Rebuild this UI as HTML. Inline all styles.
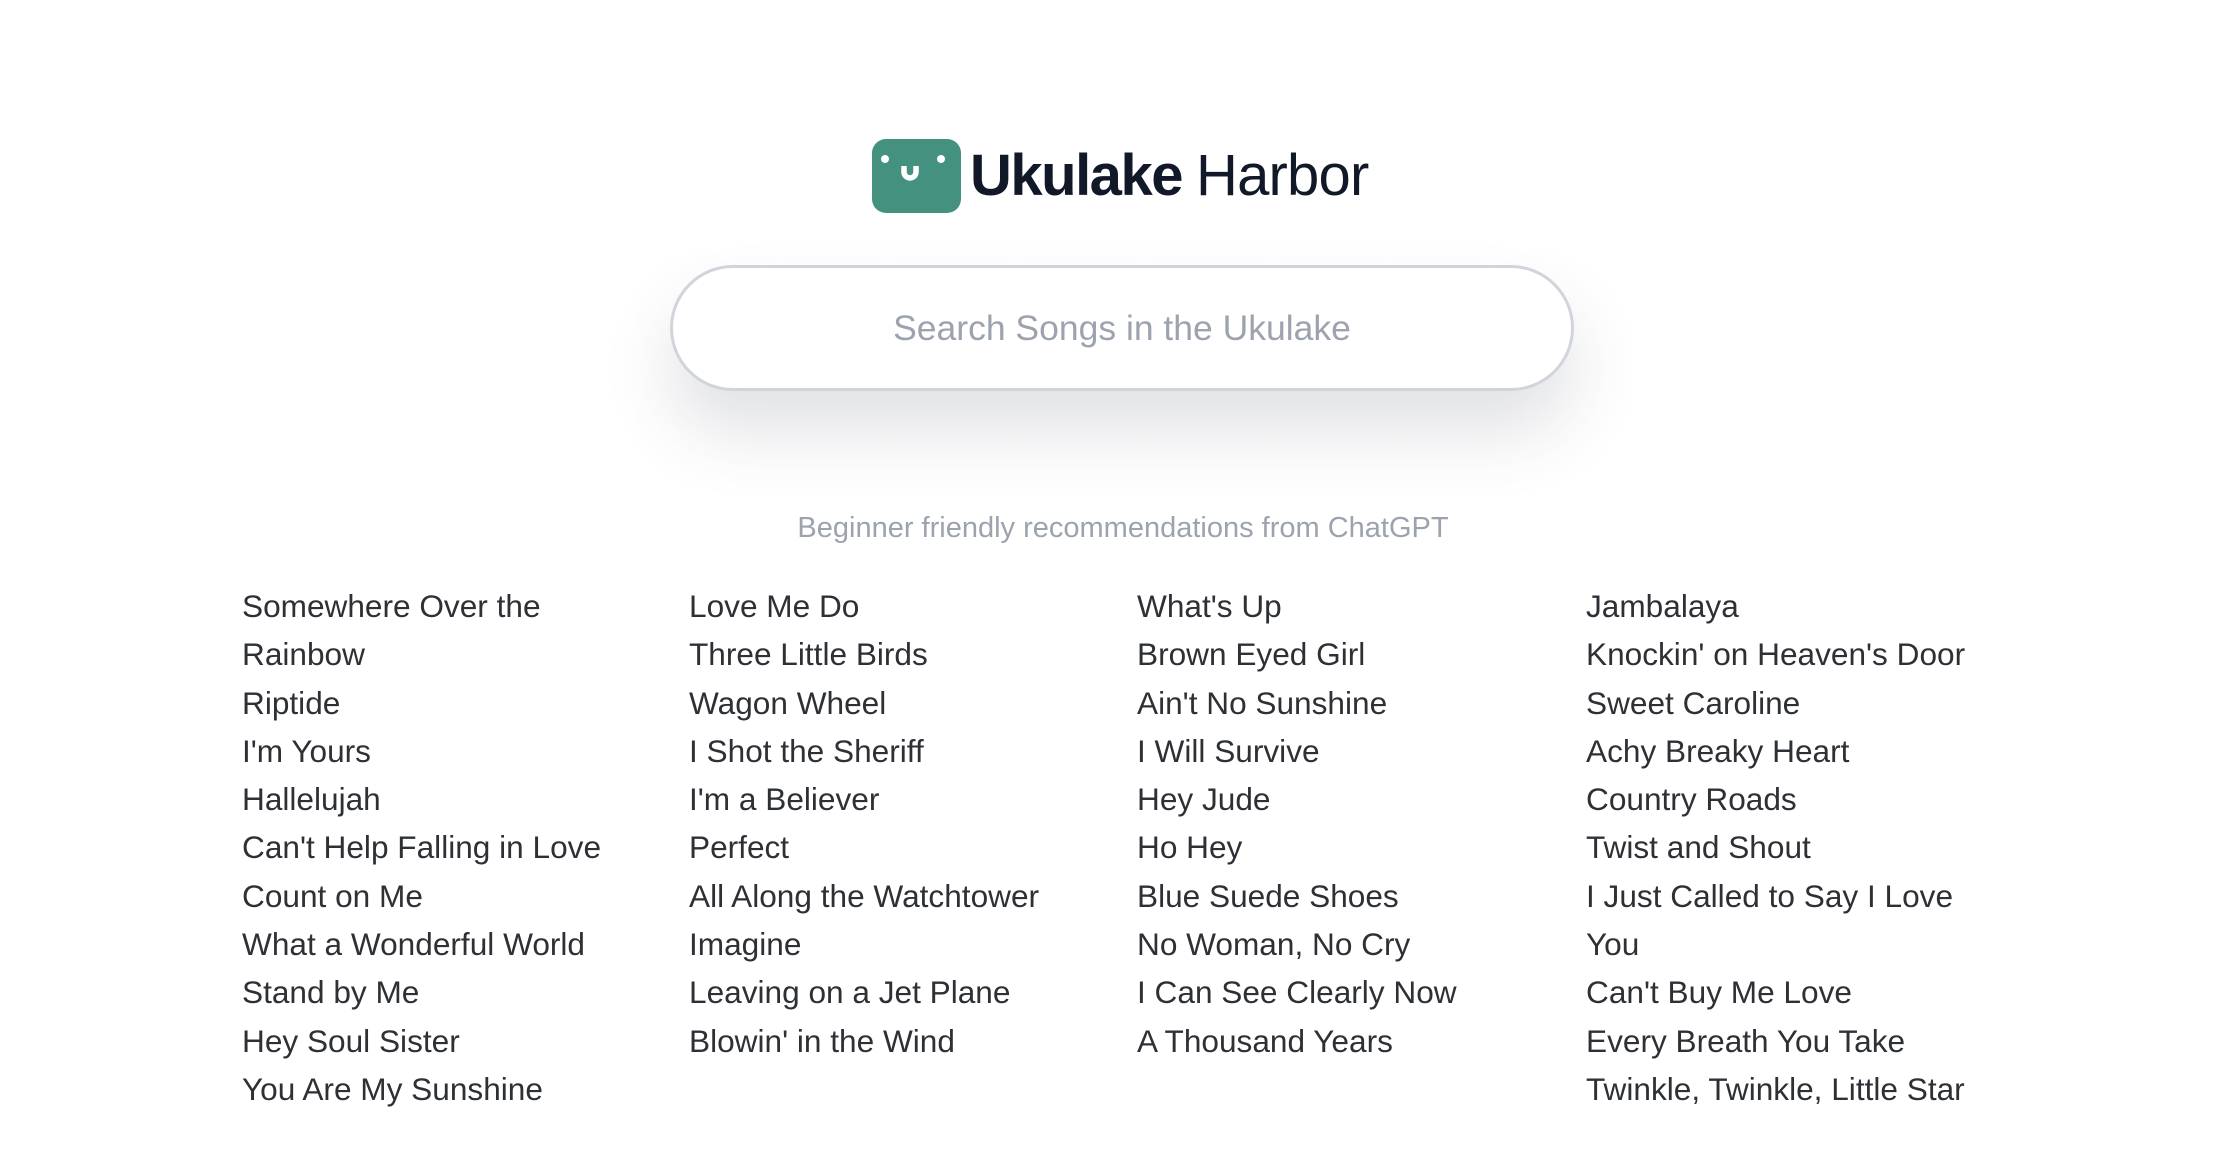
<!DOCTYPE html>
<html><head><meta charset="utf-8"><style>
html,body{margin:0;padding:0;background:#fff;width:2240px;height:1164px;overflow:hidden;font-family:"Liberation Sans",sans-serif}
.t{position:absolute;top:139px;font-size:58px;color:#111827;line-height:74px}
.search{position:absolute;left:670px;top:265px;width:898px;height:120px;border:3px solid #d1d5db;border-radius:64px;box-sizing:content-box;background:#fff;box-shadow:0 40px 70px rgba(60,70,90,0.16);text-align:center;line-height:120px;font-size:35.5px;color:#9ca3af}
.sub{position:absolute;left:0;width:2246px;top:512px;text-align:center;font-size:29px;color:#9ca3af}
.col{position:absolute;top:582px;font-size:31.6px;line-height:48.3px;color:#2d3035;white-space:nowrap}
</style></head><body>
<svg style="position:absolute;left:872px;top:139px" width="89" height="74" viewBox="0 0 89 74">
<rect width="89" height="74" rx="14" fill="#44917f"/>
<circle cx="13" cy="20" r="4" fill="#fff"/><circle cx="69" cy="20" r="4" fill="#fff"/>
<path d="M32 27 v6 a6 6 0 0 0 12 0 v-6" fill="none" stroke="#fff" stroke-width="5.5"/>
</svg>
<div class="t" style="left:970px;font-weight:bold;letter-spacing:-1.5px">Ukulake</div>
<div class="t" style="left:1196px;letter-spacing:-0.8px">Harbor</div>
<div class="search">Search Songs in the Ukulake</div>
<div class="sub">Beginner friendly recommendations from ChatGPT</div>
<div class="col" style="left:242px">Somewhere Over the<br>Rainbow<br>Riptide<br>I'm Yours<br>Hallelujah<br>Can't Help Falling in Love<br>Count on Me<br>What a Wonderful World<br>Stand by Me<br>Hey Soul Sister<br>You Are My Sunshine</div>
<div class="col" style="left:689px">Love Me Do<br>Three Little Birds<br>Wagon Wheel<br>I Shot the Sheriff<br>I'm a Believer<br>Perfect<br>All Along the Watchtower<br>Imagine<br>Leaving on a Jet Plane<br>Blowin' in the Wind</div>
<div class="col" style="left:1137px">What's Up<br>Brown Eyed Girl<br>Ain't No Sunshine<br>I Will Survive<br>Hey Jude<br>Ho Hey<br>Blue Suede Shoes<br>No Woman, No Cry<br>I Can See Clearly Now<br>A Thousand Years</div>
<div class="col" style="left:1586px">Jambalaya<br>Knockin' on Heaven's Door<br>Sweet Caroline<br>Achy Breaky Heart<br>Country Roads<br>Twist and Shout<br>I Just Called to Say I Love<br>You<br>Can't Buy Me Love<br>Every Breath You Take<br>Twinkle, Twinkle, Little Star</div>
</body></html>
